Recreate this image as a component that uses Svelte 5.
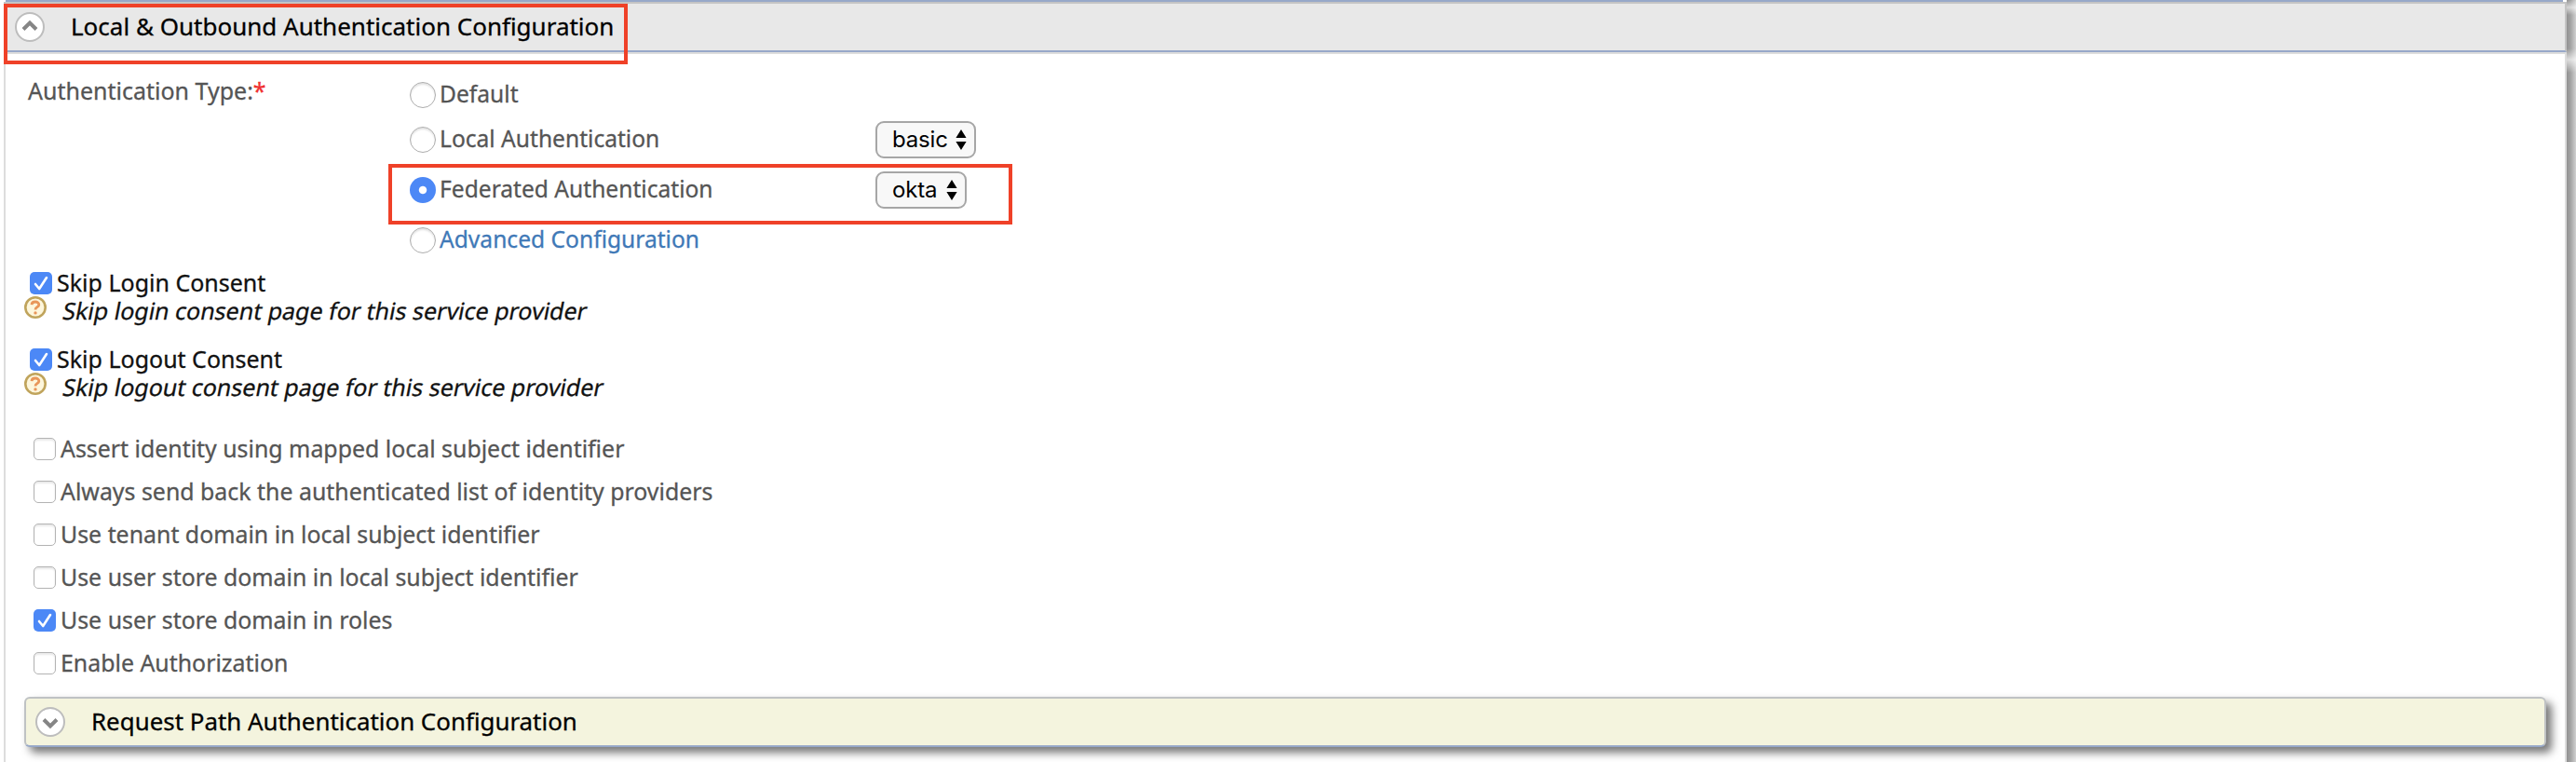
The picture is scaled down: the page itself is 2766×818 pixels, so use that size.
<script>
  const radios = [
    { label: 'Default' },
    { label: 'Local Authentication', select: 'basic', width: 108 },
    { label: 'Federated Authentication', select: 'okta', width: 98, checked: true },
    { label: 'Advanced Configuration', link: true }
  ];
  const consents = [
    { label: 'Skip Login Consent', help: 'Skip login consent page for this service provider' },
    { label: 'Skip Logout Consent', help: 'Skip logout consent page for this service provider' }
  ];
  const options = [
    { label: 'Assert identity using mapped local subject identifier' },
    { label: 'Always send back the authenticated list of identity providers' },
    { label: 'Use tenant domain in local subject identifier' },
    { label: 'Use user store domain in local subject identifier' },
    { label: 'Use user store domain in roles', checked: true },
    { label: 'Enable Authorization' }
  ];
</script>

{#snippet toggle(down)}
  <svg class="toggle" width="32" height="32" viewBox="0 0 32 32">
    <circle cx="16" cy="16" r="15" fill="#fff" stroke="#bdbdbd" stroke-width="2" />
    <path d="M9 18.5 16 11.5 23 18.5" transform={down ? 'rotate(180 16 16)' : undefined} fill="none" stroke="#858585" stroke-width="4" />
  </svg>
{/snippet}

{#snippet checkbox(checked)}
  <span class="check" class:checked>
    {#if checked}
      <svg width="24" height="24" viewBox="0 0 24 24"><path d="M6 13 10.2 18 18 6" fill="none" stroke="#fff" stroke-width="2.6" stroke-linecap="round" stroke-linejoin="round" /></svg>
    {/if}
  </span>
{/snippet}

<div class="page">
  <div class="topline"></div>
  <div class="shade"></div>
  <header>
    {@render toggle(false)}
    <h2>Local &amp; Outbound Authentication Configuration</h2>
  </header>
  <main>
    <section class="auth">
      <div class="type">Authentication Type:<em>*</em></div>
      <div class="radios">
        {#each radios as r}
          <div class="radio-row">
            <span class="radio" class:on={r.checked}></span>
            <span class="label" class:link={r.link}>{r.label}</span>
            {#if r.select}
              <span class="select" style="width:{r.width}px">
                <span>{r.select}</span>
                <svg width="12" height="22" viewBox="0 0 12 22"><path d="M6 0 11.6 9H.4ZM6 22 .4 13H11.6Z" /></svg>
              </span>
            {/if}
          </div>
        {/each}
      </div>
    </section>

    <section class="consents">
      {#each consents as c}
        <div class="consent">
          <div class="consent-row">{@render checkbox(true)}<span>{c.label}</span></div>
          <div class="help">
            <svg width="24" height="24" viewBox="0 0 24 24">
              <circle cx="12" cy="12" r="10.7" fill="#fdf6dc" stroke="#c0a45c" stroke-width="2.6" />
              <path d="M8 9.1C8.2 4.9 15.9 5 15.8 9.1 15.7 11.7 12 11.6 12 14.4" fill="none" stroke="#e8965a" stroke-width="2.8" />
              <circle cx="12" cy="17.9" r="1.7" fill="#e8965a" />
            </svg>
            <span>{c.help}</span>
          </div>
        </div>
      {/each}
    </section>

    <section class="options">
      {#each options as o}
        <div class="option">{@render checkbox(o.checked)}<span>{o.label}</span></div>
      {/each}
    </section>

    <div class="request">
      {@render toggle(true)}
      <h2>Request Path Authentication Configuration</h2>
    </div>
  </main>
  <div class="mark mark-title"></div>
  <div class="mark mark-federated"></div>
</div>

<style>
  :global(body) { background: #fff; overflow: hidden; }
  .page {
    position: relative; box-sizing: border-box; width: 2766px; height: 818px; overflow: hidden;
    font: 25px/30px 'Noto Sans', sans-serif; color: #555; white-space: nowrap;
    -webkit-text-stroke: .3px currentColor;
  }
  .topline { height: 2px; margin: 0 14px 0 6px; background: #97a8c9; }
  .shade {
    position: absolute; right: 0; top: 0; width: 10px; height: 818px;
    background: linear-gradient(90deg, #929292, #a2a2a2 40%, #d0d0d0);
  }
  .shade::after {
    content: ''; position: absolute; inset: 0;
    background: linear-gradient(#fff0 0, #fff9 8px, #fff0 16px, #fff0 52px, #fffa 64px, #fff0 78px);
  }
  header {
    box-sizing: border-box; width: 2752px; height: 54px; margin-left: 4px; padding: 0 0 0 12px;
    display: flex; align-items: center; gap: 28px;
    background: #e8e8e8; border-top: 2px solid #c4c4c4; border-right: 2px solid #c4c4c4; border-bottom: 2px solid #97a8c9;
  }
  h2 { margin: 0; padding-bottom: 2px; font-size: 26px; line-height: 30px; font-weight: 400; color: #000; }
  .toggle { flex: none; display: block; }
  main {
    box-sizing: border-box; width: 2752px; height: 762px; margin-left: 4px;
    border: 2px solid #ddd; border-bottom: 0; padding: 17px 20px 0;
  }
  .auth { display: flex; height: 215px; }
  .type { width: 410px; padding-left: 4px; padding-top: 7px; box-sizing: border-box; }
  .type em { font-style: normal; color: #f03030; }
  .radios { display: flex; flex-direction: column; }
  .radio-row { height: 54px; display: flex; align-items: center; font-size: 24.6px; padding-left: 4px; }
  .radio-row:first-child { height: 42px; padding-top: 6px; }
  .radio {
    box-sizing: border-box; width: 28px; height: 28px; border-radius: 50%;
    border: 1.5px solid #adadad; background: #fff; box-shadow: inset 0 2px 2px #e3e3e3;
  }
  .radio.on { border: 0; background: radial-gradient(circle, #fff 3.7px, #4c88f6 4.7px); box-shadow: none; }
  .label { width: 468px; padding-left: 2px; padding-bottom: 2px; margin-left: 2px; }
  .link { color: #3f79b7; }
  .select {
    box-sizing: border-box; height: 40px; padding: 0 8px 0 16px;
    display: flex; align-items: center; justify-content: space-between;
    border: 2px solid #a6a6a6; border-radius: 9px; background: #f8f8f8;
    font-family: Inter, sans-serif; font-size: 24px; color: #000; -webkit-text-stroke: 0;
  }
  .select span { letter-spacing: -.15px; }
  .consents { display: flex; flex-direction: column; }
  .consent { height: 82px; }
  .consent-row { display: flex; align-items: center; gap: 5px; height: 28px; padding-left: 6px; color: #111; }
  .consent-row span:last-child, .option span:last-child { padding-bottom: 2px; }
  .help { display: flex; align-items: flex-start; gap: 17px; height: 30px; color: #111; }
  .help span { transform: skewX(-11deg); transform-origin: 0 20px; }
  .check {
    box-sizing: border-box; flex: none; width: 24px; height: 24px; border-radius: 5px;
    border: 1.5px solid #b3b3b3; background: #fff; box-shadow: inset 0 2px 2px #e9e9e9;
  }
  .check.checked { border: 0; background: #4c88f6; box-shadow: none; }
  .check svg { display: block; }
  .options { padding-top: 5px; }
  .option { height: 46px; display: flex; align-items: center; gap: 5px; padding-left: 10px; font-size: 24.9px; }
  .request {
    box-sizing: border-box; width: 2708px; height: 54px; margin-top: 13px; padding: 0 0 0 10px;
    display: flex; align-items: center; gap: 28px;
    background: #f4f4de; border: 2px solid #bfc2c4; border-bottom-color: #97a8c9; border-radius: 6px;
    box-shadow: 6px 6px 10px #777;
  }
  .request h2 { font-size: 25.9px; }
  .mark { position: absolute; box-sizing: border-box; border: 4px solid #ef4128; }
  .mark-title { left: 4px; top: 4px; width: 670px; height: 65px; }
  .mark-federated { left: 417px; top: 176px; width: 670px; height: 65px; }
</style>
